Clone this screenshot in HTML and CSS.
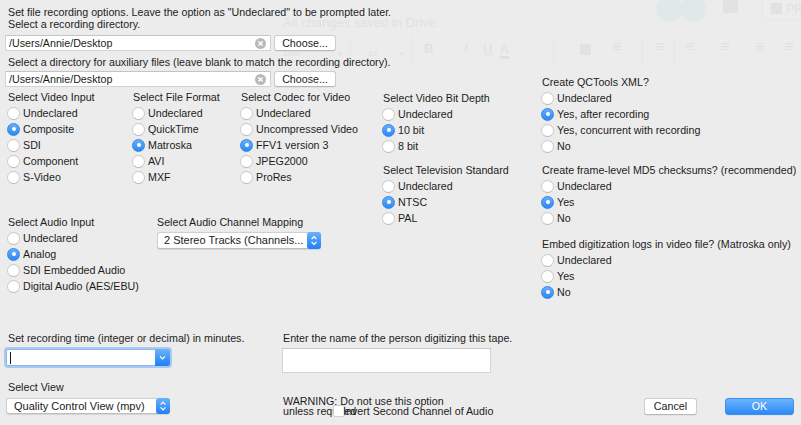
FILE: index.html
```html
<!DOCTYPE html>
<html>
<head>
<meta charset="utf-8">
<link rel="stylesheet" href="styles.css">
</head>
<body>
<div class="ghost" aria-hidden="true">
  <span class="g g-saved">All changes saved in Drive</span>
  <span class="g g-font">Lato</span><span class="g g-caret c1">▾</span>
  <span class="g g-size">13</span><span class="g g-caret c2">▾</span>
  <span class="g g-sep s1"></span><span class="g g-sep s2"></span><span class="g g-sep s3"></span><span class="g g-sep s4"></span><span class="g g-sep s5"></span>
  <span class="g g-b">B</span><span class="g g-i">I</span><span class="g g-u">U</span><span class="g g-a">A</span>
  <span class="g g-tool t1">≡</span><span class="g g-tool t2">≡</span><span class="g g-tool t3">≡</span><span class="g g-tool t4">≡</span><span class="g g-tool t5">≡</span><span class="g g-tool t6">≡</span>
  <span class="g g-img"></span>
  <span class="g g-av a1"></span><span class="g g-av a2"></span>
  <span class="g g-comment"></span>
  <span class="g g-present"><span class="g-play"></span>PRE</span>
</div>

<div class="dialog">
  <div class="top">
    <div class="main">
      <p class="intro">Set file recording options. Leave the option as "Undeclared" to be prompted later.<br>Select a recording directory.</p>
      <div class="pathrow first">
        <div class="field">/Users/Annie/Desktop
          <svg class="clear" width="11" height="11" viewBox="0 0 11 11"><circle cx="5.5" cy="5.5" r="5.5" fill="#b9b9b9"/><path d="M3.4 3.4 L7.6 7.6 M7.6 3.4 L3.4 7.6" stroke="#fff" stroke-width="1.4"/></svg>
        </div>
        <div class="btn choose">Choose...</div>
      </div>
      <p class="label aux">Select a directory for auxiliary files (leave blank to match the recording directory).</p>
      <div class="pathrow second">
        <div class="field">/Users/Annie/Desktop
          <svg class="clear" width="11" height="11" viewBox="0 0 11 11"><circle cx="5.5" cy="5.5" r="5.5" fill="#b9b9b9"/><path d="M3.4 3.4 L7.6 7.6 M7.6 3.4 L3.4 7.6" stroke="#fff" stroke-width="1.4"/></svg>
        </div>
        <div class="btn choose">Choose...</div>
      </div>

      <div class="groups">
        <div class="leftgroups">
          <div class="videorow">
            <div class="group col-input">
              <div class="head">Select Video Input</div>
              <div class="radio"><span class="dot"></span>Undeclared</div>
              <div class="radio"><span class="dot on"></span>Composite</div>
              <div class="radio"><span class="dot"></span>SDI</div>
              <div class="radio"><span class="dot"></span>Component</div>
              <div class="radio"><span class="dot"></span>S-Video</div>
            </div>
            <div class="group col-format">
              <div class="head">Select File Format</div>
              <div class="radio"><span class="dot"></span>Undeclared</div>
              <div class="radio"><span class="dot"></span>QuickTime</div>
              <div class="radio"><span class="dot on"></span>Matroska</div>
              <div class="radio"><span class="dot"></span>AVI</div>
              <div class="radio"><span class="dot"></span>MXF</div>
            </div>
            <div class="group col-codec">
              <div class="head">Select Codec for Video</div>
              <div class="radio"><span class="dot"></span>Undeclared</div>
              <div class="radio"><span class="dot"></span>Uncompressed Video</div>
              <div class="radio"><span class="dot on"></span>FFV1 version 3</div>
              <div class="radio"><span class="dot"></span>JPEG2000</div>
              <div class="radio"><span class="dot"></span>ProRes</div>
            </div>
          </div>
          <div class="audiorow">
            <div class="group col-audio">
              <div class="head">Select Audio Input</div>
              <div class="radio"><span class="dot"></span>Undeclared</div>
              <div class="radio"><span class="dot on"></span>Analog</div>
              <div class="radio"><span class="dot"></span>SDI Embedded Audio</div>
              <div class="radio"><span class="dot"></span>Digital Audio (AES/EBU)</div>
            </div>
            <div class="group col-mapping">
              <div class="head">Select Audio Channel Mapping</div>
              <div class="popup mapping">2 Stereo Tracks (Channels...
                <svg class="stepper" width="14" height="17" viewBox="0 0 14 17"><defs><linearGradient id="bl1" x1="0" y1="0" x2="0" y2="1"><stop offset="0" stop-color="#6cb2fb"/><stop offset="1" stop-color="#1f80f5"/></linearGradient></defs><rect x="0" y="0" width="14" height="17" rx="3" fill="url(#bl1)"/><path d="M4.6 7 L7 4.6 L9.4 7 M4.6 10 L7 12.4 L9.4 10" fill="none" stroke="#fff" stroke-width="1.2"/></svg>
              </div>
            </div>
          </div>
        </div>
        <div class="midcol">
          <div class="group">
            <div class="head">Select Video Bit Depth</div>
            <div class="radio"><span class="dot"></span>Undeclared</div>
            <div class="radio"><span class="dot on"></span>10 bit</div>
            <div class="radio"><span class="dot"></span>8 bit</div>
          </div>
          <div class="group tv">
            <div class="head">Select Television Standard</div>
            <div class="radio"><span class="dot"></span>Undeclared</div>
            <div class="radio"><span class="dot on"></span>NTSC</div>
            <div class="radio"><span class="dot"></span>PAL</div>
          </div>
        </div>
      </div>
    </div>

    <div class="rightcol">
      <div class="group">
        <div class="head">Create QCTools XML?</div>
        <div class="radio"><span class="dot"></span>Undeclared</div>
        <div class="radio"><span class="dot on"></span>Yes, after recording</div>
        <div class="radio"><span class="dot"></span>Yes, concurrent with recording</div>
        <div class="radio"><span class="dot"></span>No</div>
      </div>
      <div class="group md5">
        <div class="head">Create frame-level MD5 checksums? (recommended)</div>
        <div class="radio"><span class="dot"></span>Undeclared</div>
        <div class="radio"><span class="dot on"></span>Yes</div>
        <div class="radio"><span class="dot"></span>No</div>
      </div>
      <div class="group embed">
        <div class="head">Embed digitization logs in video file? (Matroska only)</div>
        <div class="radio"><span class="dot"></span>Undeclared</div>
        <div class="radio"><span class="dot"></span>Yes</div>
        <div class="radio"><span class="dot on"></span>No</div>
      </div>
    </div>
  </div>

  <div class="bottom">
    <div class="bcol1">
      <div class="head">Set recording time (integer or decimal) in minutes.</div>
      <div class="combo"><span class="caret"></span>
        <svg class="combobtn" width="15" height="17" viewBox="0 0 15 17"><defs><linearGradient id="bl2" x1="0" y1="0" x2="0" y2="1"><stop offset="0" stop-color="#6cb2fb"/><stop offset="1" stop-color="#1f80f5"/></linearGradient></defs><path d="M0 0 H12 A3 3 0 0 1 15 3 V14 A3 3 0 0 1 12 17 H0 Z" fill="url(#bl2)"/><path d="M5 7.4 L7.5 9.9 L10 7.4" fill="none" stroke="#fff" stroke-width="1.2"/></svg>
      </div>
      <div class="head view">Select View</div>
      <div class="popup viewsel">Quality Control View (mpv)
        <svg class="stepper" width="14" height="16" viewBox="0 0 14 16"><defs><linearGradient id="bl3" x1="0" y1="0" x2="0" y2="1"><stop offset="0" stop-color="#6cb2fb"/><stop offset="1" stop-color="#1f80f5"/></linearGradient></defs><rect x="0" y="0" width="14" height="16" rx="3" fill="url(#bl3)"/><path d="M4.6 6.6 L7 4.2 L9.4 6.6 M4.6 9.4 L7 11.8 L9.4 9.4" fill="none" stroke="#fff" stroke-width="1.2"/></svg>
      </div>
    </div>
    <div class="bcol2">
      <div class="head">Enter the name of the person digitizing this tape.</div>
      <div class="namefield"></div>
      <div class="warning">WARNING: Do not use this option<br>unless required
        <div class="invert"><span class="check"></span>Invert Second Channel of Audio</div>
      </div>
    </div>
    <div class="buttons">
      <div class="btn cancel">Cancel</div>
      <div class="btn ok">OK</div>
    </div>
  </div>
</div>
</body>
</html>
```

FILE: styles.css
```css
html, body {
  margin: 0;
  padding: 0;
}
body {
  width: 801px;
  height: 425px;
  overflow: hidden;
  position: relative;
  background: #ececec;
  color: #1c1c1c;
  font-family: "Liberation Sans", Arial, sans-serif;
  font-size: 10.7px;
  line-height: 12px;
}
p { margin: 0; }

/* faint ghost of the window behind the dialog */
.ghost {
  position: absolute;
  left: 0; top: 0;
  width: 801px; height: 425px;
  z-index: 0;
}
.g { position: absolute; color: #e1e1e1; }
.g-saved { left: 283px; top: 15px; font-size: 13px; line-height: 15px; }
.g-font { left: 284px; top: 51px; font-size: 8px; line-height: 5px; }
.g-size { left: 368px; top: 51px; font-size: 8px; line-height: 5px; }
.g-caret { top: 51px; font-size: 7px; line-height: 5px; }
.g-caret.c1 { left: 338px; }
.g-caret.c2 { left: 400px; }
.g-sep { top: 36px; width: 1px; height: 28px; background: #e6e6e6; }
.g-sep.s1 { left: 350px; }
.g-sep.s2 { left: 412px; }
.g-sep.s3 { left: 553px; }
.g-sep.s4 { left: 642px; }
.g-sep.s5 { left: 674px; }
.g-b { left: 424px; top: 43px; font-size: 13px; font-weight: bold; }
.g-i { left: 464px; top: 43px; font-size: 13px; font-style: italic; }
.g-u { left: 483px; top: 43px; font-size: 13px; text-decoration: underline; }
.g-a { left: 500px; top: 43px; font-size: 13px; border-bottom: 3px solid #e0e0e0; line-height: 13px; }
.g-tool { top: 41px; font-size: 16px; }
.g-tool.t1 { left: 612px; }
.g-tool.t2 { left: 655px; }
.g-tool.t3 { left: 685px; }
.g-tool.t4 { left: 720px; }
.g-tool.t5 { left: 755px; }
.g-tool.t6 { left: 784px; }
.g-img { left: 580px; top: 44px; width: 11px; height: 11px; background: #e2e2e2; }
.g-av { top: -4px; width: 26px; height: 26px; border-radius: 50%; background: #e0e8e8; }
.g-av.a1 { left: 656px; }
.g-av.a2 { left: 680px; }
.g-comment { left: 723px; top: 0; width: 15px; height: 13px; background: #e2e2e2; }
.g-present { left: 762px; top: -3px; font-size: 12px; line-height: 22px; padding: 0 0 0 8px; border: 1px solid #e7e7e7; width: 40px; height: 22px; }
.g-play { display: inline-block; width: 11px; height: 11px; background: #e1e1e1; margin-right: 4px; vertical-align: -1px; }

/* dialog */
.dialog {
  position: relative;
  z-index: 1;
  padding: 6px 7px 0 8px;
}
.top { display: flex; }
.main { width: 534px; flex: none; }
.rightcol { margin-top: 70px; }

.pathrow { display: flex; align-items: center; height: 16px; }
.pathrow.first { margin-top: 5px; }
.pathrow.second { margin-top: 3px; }
.aux { margin-top: 5px; }

.field {
  position: relative;
  box-sizing: border-box;
  width: 266px;
  height: 16px;
  margin-left: -3px;
  padding: 0 0 0 3px;
  line-height: 15px;
  background: #fff;
  border: 1px solid #d2d2d2;
  border-top-color: #c4c4c4;
}
.clear { position: absolute; right: 4px; top: 2px; }

.btn {
  box-sizing: border-box;
  text-align: center;
  background: #fff;
  border: 1px solid #cdcdcd;
  border-bottom-color: #b9b9b9;
  border-radius: 3px;
  box-shadow: 0 0.5px 0.5px rgba(0,0,0,0.08);
}
.choose { width: 62px; height: 16px; line-height: 14px; margin-left: 3px; }

.groups { display: flex; margin-top: 4px; }
.leftgroups { width: 375px; flex: none; }
.videorow { display: flex; }
.col-input { width: 125px; }
.col-format { width: 108px; }
.col-codec { width: 142px; }
.audiorow { display: flex; margin-top: 31px; }
.col-audio { width: 149px; flex: none; }
.midcol { padding-top: 1px; }
.tv { margin-top: 10px; }
.md5 { margin-top: 10px; }
.embed { margin-top: 12px; }

.head { height: 12px; white-space: nowrap; }
.group .head { margin-bottom: 2px; }

.radio {
  display: flex;
  align-items: center;
  height: 16px;
  white-space: nowrap;
}
.dot {
  box-sizing: border-box;
  position: relative;
  flex: none;
  width: 13px;
  height: 13px;
  margin-left: -1px;
  margin-right: 3px;
  border-radius: 50%;
  background: #fff;
  border: 1px solid #cbcbcb;
  border-bottom-color: #b7b7b7;
}
.dot.on {
  background: linear-gradient(#67affb, #2a88f6);
  border-color: #3286e8;
}
.dot.on::after {
  content: "";
  position: absolute;
  left: 3.5px; top: 3.5px;
  width: 4px; height: 4px;
  border-radius: 50%;
  background: #fff;
}

.popup {
  position: relative;
  box-sizing: border-box;
  background: #fff;
  border-radius: 3px;
  border: 1px solid #d0d0d0;
  border-bottom-color: #bdbdbd;
  box-shadow: 0 0.5px 1px rgba(0,0,0,0.1);
  white-space: nowrap;
}
.popup .stepper { position: absolute; right: -1px; top: -1px; }
.mapping {
  width: 164px;
  height: 17px;
  line-height: 15px;
  padding-left: 6px;
  margin-top: 4px;
  font-size: 11px;
}

/* bottom area */
.bottom { display: flex; margin-top: 32px; }
.bcol1 { width: 275px; flex: none; }
.combo {
  position: relative;
  box-sizing: border-box;
  width: 164px;
  height: 17px;
  margin-top: 5px;
  margin-left: -2px;
  background: #fff;
  border: 1px solid #8fb7ee;
  border-radius: 2px;
  box-shadow: 0 0 0 2px #a9c9f3;
}
.caret {
  position: absolute;
  left: 3px; top: 2px;
  width: 1px; height: 12px;
  background: #111;
}
.combobtn { position: absolute; right: -1px; top: -1px; }
.head.view { margin-top: 15px; }
.viewsel {
  width: 164px;
  height: 16px;
  line-height: 14px;
  margin-top: 5px;
  margin-left: -2px;
  padding-left: 7px;
  font-size: 11px;
}

.bcol2 { width: 330px; flex: none; }
.namefield {
  box-sizing: border-box;
  width: 209px;
  height: 25px;
  margin-top: 4px;
  margin-left: -1px;
  background: #fff;
  border: 1px solid #d4d4d4;
  border-top-color: #c6c6c6;
}
.warning {
  position: relative;
  margin-top: 23px;
  line-height: 10px;
  white-space: nowrap;
}
.invert {
  position: absolute;
  left: 50px;
  top: 9px;
  display: flex;
  align-items: center;
  height: 12px;
  line-height: 12px;
}
.check {
  box-sizing: border-box;
  width: 12px;
  height: 12px;
  margin-right: -2px;
  background: #fff;
  border: 1px solid #d0d0d0;
  border-radius: 2px;
}

.buttons {
  margin-left: auto;
  align-self: flex-end;
  display: flex;
  gap: 28px;
  margin-bottom: 1px;
}
.cancel { width: 53px; height: 17px; line-height: 15px; }
.ok {
  width: 69px;
  height: 17px;
  line-height: 15px;
  color: #fff;
  border: 1px solid #3a8ff2;
  background: linear-gradient(#6cb4fb, #2c89f6);
}
```
